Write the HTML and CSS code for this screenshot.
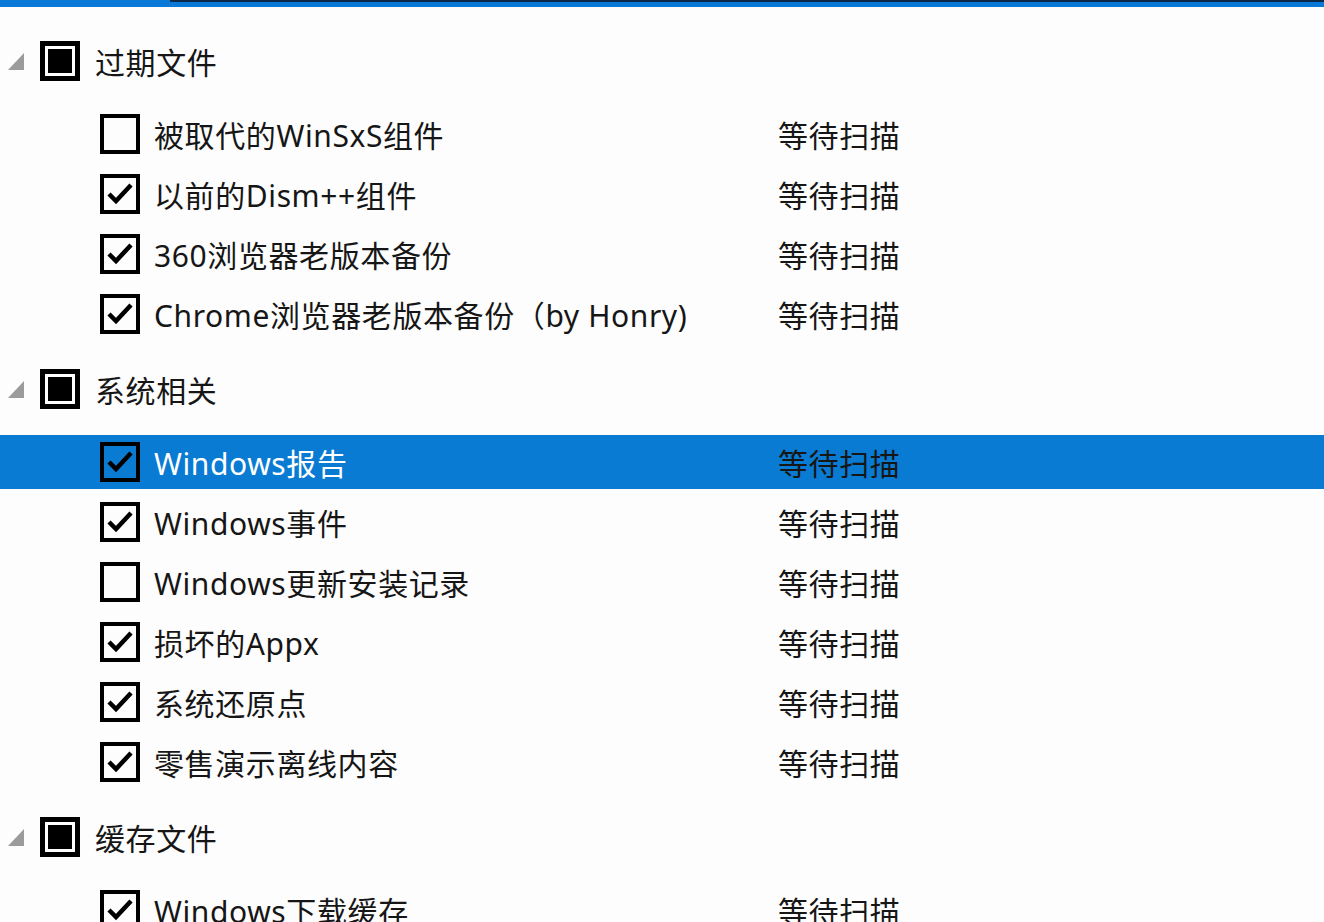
FILE: index.html
```html
<!DOCTYPE html>
<html lang="zh-CN">
<head>
  <meta charset="UTF-8">
  <title>空间回收</title>
  <link rel="stylesheet" href="styles.css">
</head>
<body>
  <div class="topbar">
    <div class="topbar-tab"></div>
    <div class="topbar-rest"></div>
  </div>

  <div class="tree">
    <div class="group">
      <div class="group-head">
        <svg class="twisty" viewBox="0 0 16 17"><path d="M0 17 L16 17 L16 0 Z"/></svg>
        <span class="box box-mixed"><span class="box-fill"></span></span>
        <span class="group-name">过期文件</span>
      </div>
      <div class="item">
        <span class="box"></span>
        <span class="label">被取代的WinSxS组件</span>
        <span class="state">等待扫描</span>
      </div>
      <div class="item">
        <span class="box"><svg viewBox="0 0 32 32"><path d="M5 16 L12 23 L27 7"/></svg></span>
        <span class="label">以前的Dism++组件</span>
        <span class="state">等待扫描</span>
      </div>
      <div class="item">
        <span class="box"><svg viewBox="0 0 32 32"><path d="M5 16 L12 23 L27 7"/></svg></span>
        <span class="label">360浏览器老版本备份</span>
        <span class="state">等待扫描</span>
      </div>
      <div class="item">
        <span class="box"><svg viewBox="0 0 32 32"><path d="M5 16 L12 23 L27 7"/></svg></span>
        <span class="label">Chrome浏览器老版本备份（by Honry)</span>
        <span class="state">等待扫描</span>
      </div>
    </div>

    <div class="group">
      <div class="group-head">
        <svg class="twisty" viewBox="0 0 16 17"><path d="M0 17 L16 17 L16 0 Z"/></svg>
        <span class="box box-mixed"><span class="box-fill"></span></span>
        <span class="group-name">系统相关</span>
      </div>
      <div class="item selected">
        <span class="box"><svg viewBox="0 0 32 32"><path d="M5 16 L12 23 L27 7"/></svg></span>
        <span class="label">Windows报告</span>
        <span class="state">等待扫描</span>
      </div>
      <div class="item">
        <span class="box"><svg viewBox="0 0 32 32"><path d="M5 16 L12 23 L27 7"/></svg></span>
        <span class="label">Windows事件</span>
        <span class="state">等待扫描</span>
      </div>
      <div class="item">
        <span class="box"></span>
        <span class="label">Windows更新安装记录</span>
        <span class="state">等待扫描</span>
      </div>
      <div class="item">
        <span class="box"><svg viewBox="0 0 32 32"><path d="M5 16 L12 23 L27 7"/></svg></span>
        <span class="label">损坏的Appx</span>
        <span class="state">等待扫描</span>
      </div>
      <div class="item">
        <span class="box"><svg viewBox="0 0 32 32"><path d="M5 16 L12 23 L27 7"/></svg></span>
        <span class="label">系统还原点</span>
        <span class="state">等待扫描</span>
      </div>
      <div class="item">
        <span class="box"><svg viewBox="0 0 32 32"><path d="M5 16 L12 23 L27 7"/></svg></span>
        <span class="label">零售演示离线内容</span>
        <span class="state">等待扫描</span>
      </div>
    </div>

    <div class="group">
      <div class="group-head">
        <svg class="twisty" viewBox="0 0 16 17"><path d="M0 17 L16 17 L16 0 Z"/></svg>
        <span class="box box-mixed"><span class="box-fill"></span></span>
        <span class="group-name">缓存文件</span>
      </div>
      <div class="item">
        <span class="box"><svg viewBox="0 0 32 32"><path d="M5 16 L12 23 L27 7"/></svg></span>
        <span class="label">Windows下载缓存</span>
        <span class="state">等待扫描</span>
      </div>
    </div>
  </div>
</body>
</html>
```

FILE: styles.css
```css
html, body {
  margin: 0;
  height: 100%;
  overflow: hidden;
}
body {
  background-color: #fdfdfd;
  color: #161616;
  font-family: "Noto Sans", "Noto Sans CJK SC", sans-serif;
  font-size: 30px;
  letter-spacing: 0.6px;
}

/* accent strip along the top */
.topbar {
  display: flex;
  height: 7px;
}
.topbar-tab {
  width: 170px;
  background-color: #0a78d6;
}
.topbar-rest {
  flex: 1;
  background-color: #0a78d6;
  border-top: 2px solid #0b2a4a;
}

.tree {
  display: flex;
  flex-direction: column;
  gap: 18px;
  padding-top: 24px;
}
.group {
  display: flex;
  flex-direction: column;
  gap: 6px;
}
.group-head {
  display: flex;
  align-items: center;
  height: 60px;
  margin-bottom: 10px;
}
.twisty {
  width: 16px;
  height: 17px;
  margin: 0 16px 0 8px;
  fill: #9b9b9b;
}
.group-name {
  margin-left: 15px;
}

.item {
  display: flex;
  align-items: center;
  height: 54px;
  padding-left: 100px;
}
.item.selected {
  background-color: #0a7bd2;
}
.item.selected .label {
  color: #fff;
}
.label {
  width: 624px;
  margin-left: 14px;
  white-space: nowrap;
}

/* checkboxes */
.box {
  box-sizing: border-box;
  display: flex;
  width: 40px;
  height: 40px;
  border: 4px solid #000;
  flex-shrink: 0;
}
.box svg {
  width: 32px;
  height: 32px;
  fill: none;
  stroke: #000;
  stroke-width: 4.5;
}
.box-mixed {
  border-width: 5px;
  padding: 3px;
  background-color: #fff;
}
.box-fill {
  flex: 1;
  background-color: #000;
}
```
